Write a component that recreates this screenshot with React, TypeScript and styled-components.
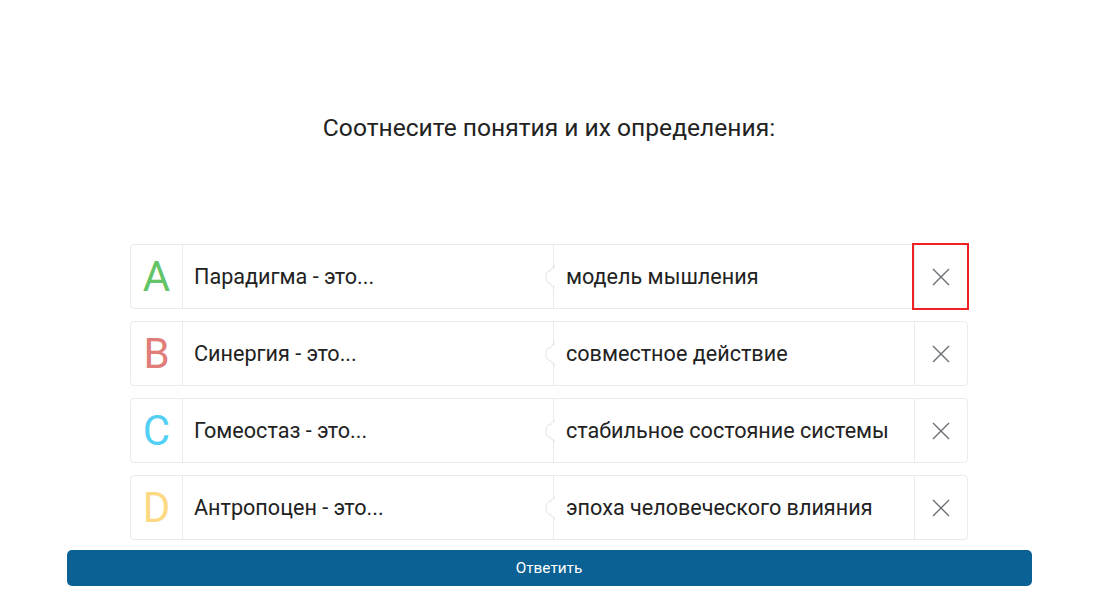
import React from 'react';
import styled, { createGlobalStyle } from 'styled-components';

const GlobalStyle = createGlobalStyle`
  html, body {
    margin: 0;
    padding: 0;
    background: #ffffff;
    font-family: Roboto, "Noto Sans", "Liberation Sans", sans-serif;
  }
`;

const Page = styled.div`
  width: 1100px;
  height: 607px;
  display: flex;
  flex-direction: column;
  align-items: center;
  box-sizing: border-box;
  padding: 112px 2px 0 0;
`;

const Title = styled.h1`
  margin: 0;
  font-size: 24.6px;
  line-height: 32px;
  font-weight: 400;
  color: #222222;
`;

const List = styled.div`
  margin-top: 100px;
  display: flex;
  flex-direction: column;
  gap: 12px;
`;

const Row = styled.div`
  width: 838px;
  height: 65px;
  box-sizing: border-box;
  display: grid;
  grid-template-columns: 52px 370px 1fr 53px;
  border: 1px solid #e9ebee;
  border-radius: 4px;
  background: #fff;
`;

const LetterCell = styled.div<{ color: string }>`
  display: flex;
  align-items: center;
  justify-content: center;
  font-size: 42px;
  font-weight: 400;
  color: ${({ color }) => color};
  border-right: 1px solid #e9ebee;
`;

const TermCell = styled.div`
  display: flex;
  align-items: center;
  padding-left: 11px;
  font-size: 21.6px;
  color: #222222;
`;

const DefCell = styled.div`
  position: relative;
  display: flex;
  align-items: center;
  padding-left: 12px;
  font-size: 21.6px;
  color: #222222;
  border-left: 1px solid #e9ebee;
`;

const Knob = styled.svg`
  position: absolute;
  left: -10px;
  top: 50%;
  transform: translateY(-50%);
`;

const CloseCell = styled.button<{ focused?: boolean }>`
  display: flex;
  align-items: center;
  justify-content: center;
  padding: 0;
  margin: 0;
  background: transparent;
  border: none;
  border-left: 1px solid #e9ebee;
  cursor: pointer;
  outline: ${({ focused }) => (focused ? '2px solid #ee2222' : 'none')};
  outline-offset: 0;
  border-radius: ${({ focused }) => (focused ? '0' : '0 4px 4px 0')};
`;

const SubmitButton = styled.button`
  margin-top: 10px;
  width: 965px;
  height: 36px;
  border: none;
  border-radius: 5px;
  background: #0b6193;
  color: #ffffff;
  font-family: Roboto, "Noto Sans", "Liberation Sans", sans-serif;
  font-size: 15.3px;
  cursor: pointer;
`;

const pairs = [
  { letter: 'A', color: '#62c466', term: 'Парадигма - это...', def: 'модель мышления' },
  { letter: 'B', color: '#e07d79', term: 'Синергия - это...', def: 'совместное действие' },
  { letter: 'C', color: '#52d0f4', term: 'Гомеостаз - это...', def: 'стабильное состояние системы' },
  { letter: 'D', color: '#fdd984', term: 'Антропоцен - это...', def: 'эпоха человеческого влияния' },
];

const CloseIcon = () => (
  <svg width="18" height="18" viewBox="0 0 18 18">
    <path d="M1 1 L17 17 M17 1 L1 17" stroke="#6b6f74" strokeWidth="1.4" fill="none" />
  </svg>
);

// puzzle tab drawn over the divider between term and definition
const PuzzleKnob = () => (
  <Knob width="11" height="24" viewBox="0 0 11 24">
    <path
      d="M10 0 L10 3 C7 3 6 4 7 6 C4 5 2 7 2 12 C2 17 4 19 7 18 C6 20 7 21 10 21 L10 24"
      stroke="#e1e4e8"
      strokeWidth="1"
      fill="#ffffff"
    />
  </Knob>
);

export default function App() {
  return (
    <>
      <GlobalStyle />
      <Page>
        <Title>Соотнесите понятия и их определения:</Title>
        <List>
          {pairs.map((p, i) => (
            <Row key={p.letter}>
              <LetterCell color={p.color}>{p.letter}</LetterCell>
              <TermCell>{p.term}</TermCell>
              <DefCell>
                <PuzzleKnob />
                {p.def}
              </DefCell>
              <CloseCell focused={i === 0} aria-label="Удалить">
                <CloseIcon />
              </CloseCell>
            </Row>
          ))}
        </List>
        <SubmitButton>Ответить</SubmitButton>
      </Page>
    </>
  );
}
